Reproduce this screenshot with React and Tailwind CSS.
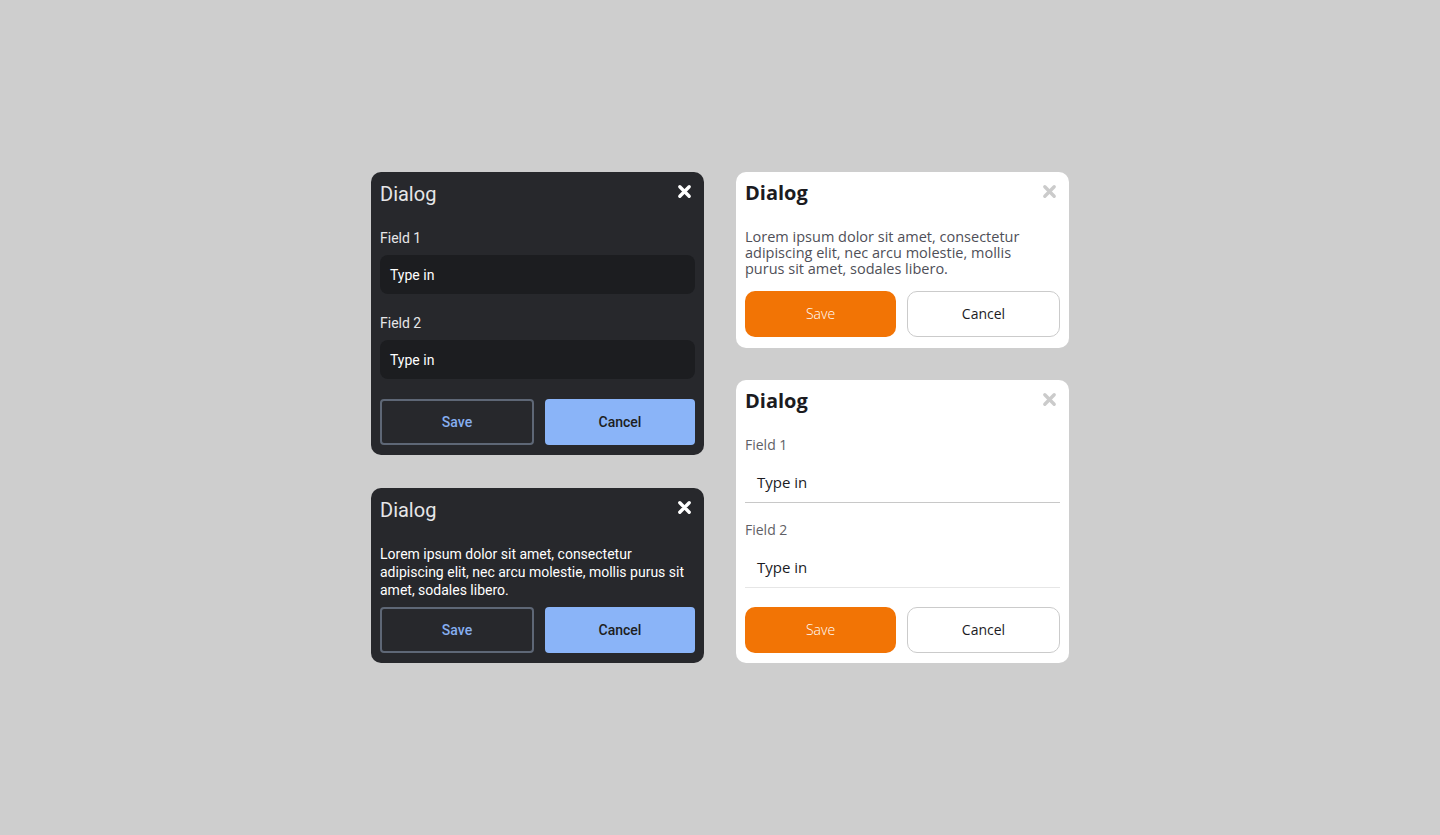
function CloseIcon({ className }) {
    return (
        <svg viewBox="0 0 16 16" className={className} fill="none" stroke="currentColor" strokeWidth="3.6" strokeLinecap="round">
            <path d="M3 3L13 13M13 3L3 13" />
        </svg>
    );
}

function DarkHeader() {
    return (
        <div className="flex items-center justify-between">
            <h2 className="text-[20px] leading-7 text-[#e6e6e8]">Dialog</h2>
            <CloseIcon className="-mt-[6px] mr-[3px] h-[15px] w-[15px] text-white" />
        </div>
    );
}

function DarkButtons() {
    return (
        <div className="flex gap-[11px]">
            <button className="h-[46px] flex-1 rounded-[4px] border-2 border-[#5e6776] text-sm font-medium text-[#86aef0]">
                Save
            </button>
            <button className="h-[46px] flex-1 rounded-[4px] bg-[#8ab4f8] text-sm font-medium text-[#1d1e22]">
                Cancel
            </button>
        </div>
    );
}

function DarkField({ label }) {
    return (
        <div>
            <label className="block text-sm leading-5 text-[#e6e6e8]">{label}</label>
            <div className="mt-[7px] flex h-[39px] items-center rounded-lg bg-[#1c1d20] px-[10px] text-sm text-white">
                Type in
            </div>
        </div>
    );
}

function LightHeader() {
    return (
        <div className="flex items-center justify-between">
            <h2 className="text-[20px] font-bold leading-7 text-[#1b1b1f]">Dialog</h2>
            <CloseIcon className="-mt-[4px] mr-[3px] h-[15px] w-[15px] text-[#cbcbcb]" />
        </div>
    );
}

function LightButtons() {
    return (
        <div className="flex gap-[11px]">
            <button className="h-[46px] flex-1 rounded-[10px] bg-[#f27405] text-sm font-light text-white">
                Save
            </button>
            <button className="h-[46px] flex-1 rounded-[10px] border border-[#cbcbcb] bg-white text-sm text-[#1b1b1f]">
                Cancel
            </button>
        </div>
    );
}

function LightField({ label, border }) {
    return (
        <div>
            <label className="block text-sm leading-5 text-[#5f5f66]">{label}</label>
            <div className={`mt-2 flex h-10 items-center border-b px-3 text-[15px] text-[#1b1b1f] ${border}`}>
                Type in
            </div>
        </div>
    );
}

export default function App() {
    const roboto = { fontFamily: "Roboto, 'Liberation Sans', sans-serif" };
    const poppins = { fontFamily: "'Open Sans', Inter, 'Liberation Sans', sans-serif" };

    return (
        <div className="flex min-h-screen items-center justify-center gap-8 bg-[#cecece]">
            <div className="flex w-[333px] flex-col gap-[33px]" style={roboto}>
                <div className="rounded-[10px] bg-[#27282c] px-[9px] pt-2 pb-[10px]">
                    <DarkHeader />
                    <div className="mt-5 flex flex-col gap-[19px]">
                        <DarkField label="Field 1" />
                        <DarkField label="Field 2" />
                    </div>
                    <div className="mt-5">
                        <DarkButtons />
                    </div>
                </div>

                <div className="rounded-[10px] bg-[#27282c] px-[9px] pt-2 pb-[10px]">
                    <DarkHeader />
                    <p className="mt-[21px] text-sm leading-[18px] text-white">
                        Lorem ipsum dolor sit amet, consectetur adipiscing elit, nec arcu molestie, mollis purus sit amet, sodales libero.
                    </p>
                    <div className="mt-2">
                        <DarkButtons />
                    </div>
                </div>
            </div>

            <div className="flex w-[333px] flex-col gap-8" style={poppins}>
                <div className="rounded-[10px] bg-white px-[9px] pt-[7px] pb-[11px]">
                    <LightHeader />
                    <p className="mt-[22px] text-[14.5px] leading-4 text-[#4f4f58]">
                        Lorem ipsum dolor sit amet, consectetur<br />
                        adipiscing elit, nec arcu molestie, mollis<br />
                        purus sit amet, sodales libero.
                    </p>
                    <div className="mt-[14px]">
                        <LightButtons />
                    </div>
                </div>

                <div className="rounded-[10px] bg-white px-[9px] pt-[7px] pb-[10px]">
                    <LightHeader />
                    <div className="mt-5 flex flex-col gap-[17px]">
                        <LightField label="Field 1" border="border-[#c8c8c8]" />
                        <LightField label="Field 2" border="border-[#e6e6e6]" />
                    </div>
                    <div className="mt-[19px]">
                        <LightButtons />
                    </div>
                </div>
            </div>
        </div>
    );
}
